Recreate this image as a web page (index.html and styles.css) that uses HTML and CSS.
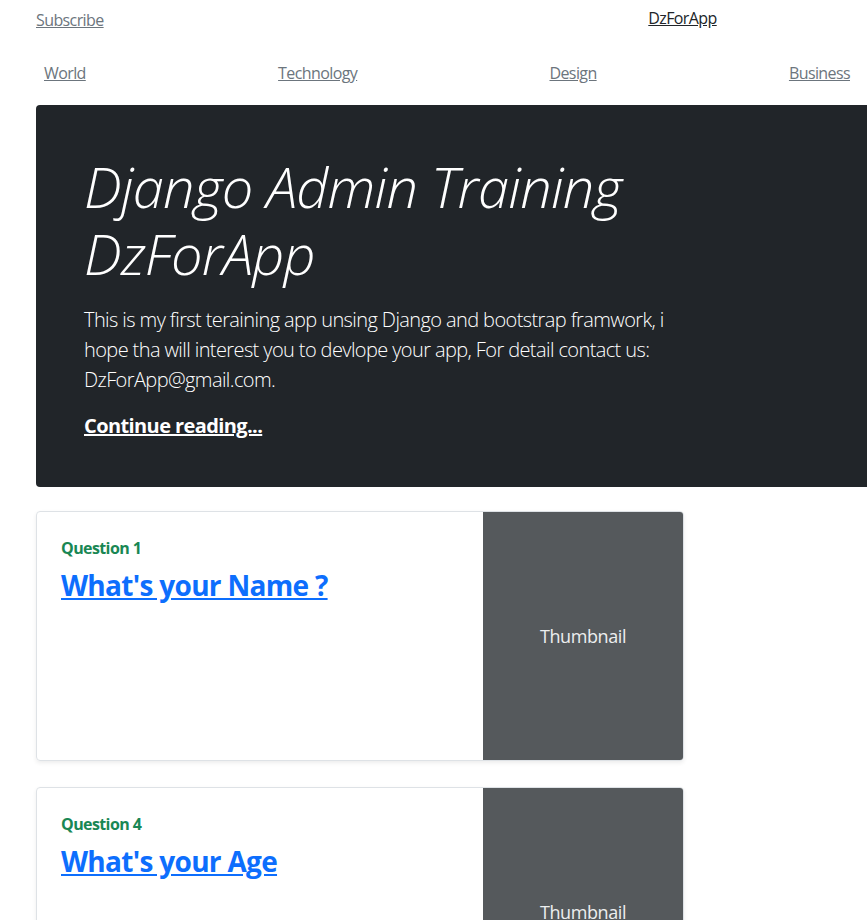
FILE: index.html
```html
<!DOCTYPE html>
<html lang="en">
<head>
<meta charset="utf-8">
<title>DzForApp</title>
<link rel="stylesheet" href="styles.css">
</head>
<body>
<div class="container">
  <header class="blog-header">
    <div class="header-col"><a class="link-secondary subscribe" href="#">Subscribe</a></div>
    <div class="header-col center"><a class="logo" href="#">DzForApp</a></div>
    <div class="header-col"></div>
  </header>
  <nav class="blog-nav">
    <a class="link-secondary nav-link" href="#">World</a>
    <a class="link-secondary nav-link" href="#">Technology</a>
    <a class="link-secondary nav-link" href="#">Design</a>
    <a class="link-secondary nav-link" href="#">Business</a>
  </nav>
  <section class="hero">
    <div class="hero-col">
      <h1 class="hero-title">Django Admin Training DzForApp</h1>
      <p class="lead hero-text">This is my first teraining app unsing Django and bootstrap framwork, i hope tha will interest you to devlope your app, For detail contact us: DzForApp@gmail.com.</p>
      <p class="lead hero-more"><a href="#">Continue reading...</a></p>
    </div>
  </section>
  <article class="card">
    <div class="card-body">
      <strong class="category">Question 1</strong>
      <h3 class="card-title"><a href="#">What's your Name ?</a></h3>
    </div>
    <div class="thumb"><span>Thumbnail</span></div>
  </article>
  <article class="card">
    <div class="card-body">
      <strong class="category">Question 4</strong>
      <h3 class="card-title"><a href="#">What's your Age</a></h3>
    </div>
    <div class="thumb"><span>Thumbnail</span></div>
  </article>
</div>
</body>
</html>
```
FILE: styles.css
```css
html { overflow: hidden; }
body {
  margin: 0;
  font-family: "Open Sans", "Liberation Sans", sans-serif;
  font-size: 16px;
  line-height: 1.5;
  letter-spacing: -0.6px;
  color: #212529;
  background: #fff;
}
.container {
  padding-left: 36px;
  width: 1296px;
}
.blog-header {
  display: grid;
  grid-template-columns: 427px 439px 430px;
  align-items: center;
  padding-top: 3px;
  height: 30px;
}
.header-col.center { text-align: center; }
.link-secondary { color: #6c757d; }
.logo { color: #212529; }
.subscribe { position: relative; top: 2px; }
.blog-nav {
  display: flex;
  justify-content: space-between;
  width: 822px;
  padding-top: 20px;
  margin-bottom: 12px;
}
.nav-link { padding: 8px; }
.hero {
  background: #212529;
  color: #fff;
  border-radius: 4px;
  padding: 48px 48px 46px;
  margin-bottom: 24px;
}
.hero-col { width: 600px; }
.hero-title {
  font-size: 56px;
  font-weight: 300;
  font-style: italic;
  line-height: 1.2;
  letter-spacing: -0.8px;
  margin: 0 0 10px;
}
.lead {
  font-size: 20px;
  font-weight: 300;
  letter-spacing: -0.6px;
  margin: 18px 0 16px;
}
.hero-more { margin-bottom: 0; margin-top: 16px; font-weight: 700; }
.hero-more a { color: #fff; }
.card {
  display: flex;
  width: 646px;
  height: 248px;
  border: 1px solid #dee2e6;
  border-radius: 4px;
  overflow: hidden;
  box-shadow: 0 2px 4px rgba(0,0,0,0.075);
  margin-bottom: 26px;
}
.card-body {
  flex: 1;
  padding: 24px;
}
.category {
  display: inline-block;
  color: #198754;
  font-weight: 700;
  margin-bottom: 9px;
}
.card-title {
  font-size: 28px;
  font-weight: 700;
  line-height: 1.2;
  letter-spacing: -0.7px;
  margin: 0;
}
.card-title a { color: #0d6efd; }
.thumb {
  width: 200px;
  background: #55595c;
  color: #eceeef;
  font-size: 18px;
  letter-spacing: -0.4px;
  display: flex;
  align-items: center;
  justify-content: center;
}
```
